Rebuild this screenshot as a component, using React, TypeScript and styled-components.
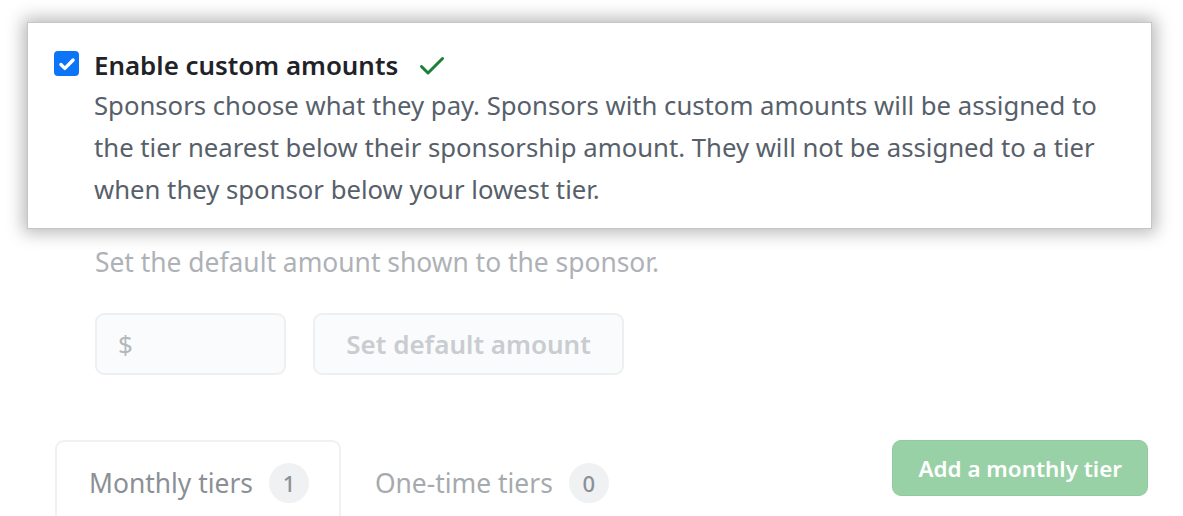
import React from "react";
import styled, { createGlobalStyle } from "styled-components";

const Global = createGlobalStyle`
  html, body { margin: 0; padding: 0; background: #ffffff; }
  body { font-family: "Noto Sans", "Open Sans", sans-serif; overflow: hidden; }
  * { box-sizing: border-box; }
`;

const Page = styled.div`
  width: 1183px;
  height: 516px;
  padding-top: 22px;
  overflow: hidden;
`;

const Card = styled.section`
  margin-left: 27px;
  width: 1125px;
  background: #ffffff;
  border: 1px solid #c6c6c6;
  box-shadow: 0 0 16px 4px rgba(0, 0, 0, 0.28);
  padding: 21px 18px 17px 26px;
  display: flex;
  gap: 15px;
  position: relative;
  z-index: 1;
`;

const CheckBox = styled.span`
  flex: none;
  width: 25px;
  height: 25px;
  margin-top: 7px;
  border-radius: 4px;
  background: #0b74f7;
  display: flex;
  align-items: center;
  justify-content: center;
`;

const Body = styled.div`
  display: flex;
  flex-direction: column;
`;

const TitleRow = styled.div`
  display: flex;
  align-items: center;
  gap: 18px;
  height: 41px;
`;

const Title = styled.span`
  font-size: 25.9px;
  font-weight: 600;
  color: #1f2328;
`;

const Desc = styled.p`
  margin: 0;
  font-size: 25.7px;
  line-height: 42px;
  color: #57606a;
`;

const Faded = styled.div`
  padding: 12px 0 0 55px;
  display: flex;
  flex-direction: column;
`;

const Hint = styled.p`
  margin: 0 0 0 40px;
  font-size: 26.4px;
  line-height: 42px;
  color: #aeb2b7;
`;

const AmountRow = styled.div`
  margin: 30px 0 0 40px;
  display: flex;
  gap: 27px;
`;

const AmountInput = styled.div`
  width: 191px;
  height: 62px;
  border: 2px solid #eeeff0;
  border-radius: 9px;
  background: #fafbfc;
  display: flex;
  align-items: center;
  padding-left: 21px;
  font-size: 26px;
  color: #b4b7bb;
`;

const GhostButton = styled.div`
  width: 311px;
  height: 62px;
  border: 2px solid #eeeff0;
  border-radius: 9px;
  background: #fafbfc;
  display: flex;
  align-items: center;
  justify-content: center;
  font-size: 26px;
  font-weight: 600;
  color: #c9ccd0;
`;

const TabBar = styled.div`
  margin-top: 65px;
  display: flex;
  align-items: flex-start;
  padding-right: 35px;
`;

const Tab = styled.div<{ $active?: boolean }>`
  height: 84px;
  padding: 0 30px 0 32px;
  display: flex;
  align-items: center;
  gap: 16px;
  border: 2px solid ${(p) => (p.$active ? "#f0f1f2" : "transparent")};
  border-bottom: none;
  border-radius: 9px 9px 0 0;
  font-size: 26.4px;
  color: ${(p) => (p.$active ? "#8b9096" : "#a6aaaf")};
`;

const Counter = styled.span`
  width: 40px;
  height: 40px;
  border-radius: 50%;
  background: #eff1f3;
  display: flex;
  align-items: center;
  justify-content: center;
  font-size: 22px;
  font-weight: 500;
  color: #8b9096;
`;

const Spacer = styled.div`
  flex: 1;
`;

const GreenButton = styled.div`
  height: 56px;
  padding: 0 25px 0 26px;
  border-radius: 9px;
  background: #99d1a7;
  border: 1px solid #93c9a0;
  display: flex;
  align-items: center;
  font-size: 22.4px;
  font-weight: 600;
  color: #ffffff;
`;

export default function App() {
  return (
    <Page>
      <Global />
      <Card>
        <CheckBox>
          <svg width="18" height="18" viewBox="0 0 16 16">
            <path d="M2.6 8.4l3.5 3.5L13.4 4.4" fill="none" stroke="#fff" strokeWidth="3" strokeLinecap="round" strokeLinejoin="round" />
          </svg>
        </CheckBox>
        <Body>
          <TitleRow>
            <Title>Enable custom amounts</Title>
            <svg width="32" height="32" viewBox="0 0 16 16" fill="#1a7f37">
              <path d="M13.78 4.22a.75.75 0 0 1 0 1.06l-7.25 7.25a.75.75 0 0 1-1.06 0L2.22 9.28a.751.751 0 0 1 .018-1.042.751.751 0 0 1 1.042-.018L6 10.94l6.72-6.72a.75.75 0 0 1 1.06 0Z" />
            </svg>
          </TitleRow>
          <Desc>
            Sponsors choose what they pay. Sponsors with custom amounts will be assigned to the tier
            nearest below their sponsorship amount. They will not be assigned to a tier when they
            sponsor below your lowest tier.
          </Desc>
        </Body>
      </Card>
      <Faded>
        <Hint>Set the default amount shown to the sponsor.</Hint>
        <AmountRow>
          <AmountInput>$</AmountInput>
          <GhostButton>Set default amount</GhostButton>
        </AmountRow>
        <TabBar>
          <Tab $active>
            Monthly tiers <Counter>1</Counter>
          </Tab>
          <Tab>
            One-time tiers <Counter>0</Counter>
          </Tab>
          <Spacer />
          <GreenButton>Add a monthly tier</GreenButton>
        </TabBar>
      </Faded>
    </Page>
  );
}
